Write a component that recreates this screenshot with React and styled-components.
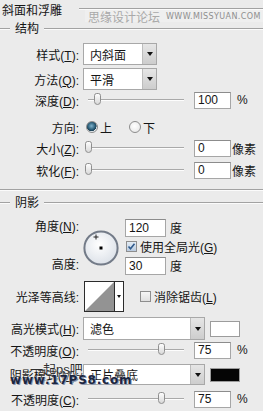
import React from "react";
import styled, { createGlobalStyle } from "styled-components";

const GlobalStyle = createGlobalStyle`
  html, body {
    margin: 0;
    padding: 0;
    background: #ebebeb;
  }
  body {
    font-family: "Liberation Sans", "Noto Sans CJK SC", sans-serif;
    font-size: 12px;
    color: #151515;
  }
`;

const Panel = styled.div`
  position: relative;
  width: 263px;
  height: 411px;
  overflow: hidden;
  background: #ebebeb;
  display: flex;
  flex-direction: column;
`;

const Header = styled.div`
  display: flex;
  align-items: center;
  height: 18px;
  padding-left: 2px;
  gap: 17px;
`;

const Rule = styled.div`
  flex: 1;
  height: 0;
  border-top: 1px solid #a2a2a2;
  border-bottom: 1px solid #fbfbfb;
`;

const Stub = styled(Rule)`
  flex: 0 0 10px;
`;

const Divider = styled(Rule)`
  flex: 0 0 auto;
  margin-top: ${(p) => p.$mt}px;
`;

const Legend = styled.div`
  display: flex;
  align-items: center;
  gap: 4px;
  height: 18px;
  margin-top: ${(p) => p.$mt}px;
`;

const LegendText = styled.span`
  padding: 0 1px;
  line-height: 18px;
`;

const Row = styled.div`
  display: flex;
  align-items: center;
  height: ${(p) => p.$h || 18}px;
  margin-top: ${(p) => p.$mt || 0}px;
`;

const Label = styled.span`
  flex: 0 0 79px;
  margin-right: 4px;
  text-align: right;
  white-space: nowrap;
`;

const Select = styled.div`
  display: flex;
  box-sizing: border-box;
  width: ${(p) => p.$w}px;
  height: 100%;
  border: 1px solid #a8a8a8;
  background: #fff;
`;

const SelectText = styled.span`
  flex: 1;
  display: flex;
  align-items: center;
  padding-left: 6px;
`;

const SelectArrow = styled.span`
  flex: 0 0 13px;
  display: flex;
  align-items: center;
  justify-content: center;
  border-left: 1px solid #bdbdbd;
  background: linear-gradient(#e6e6e6, #cdcdcd);

  &::after {
    content: "";
    border-left: 3px solid transparent;
    border-right: 3px solid transparent;
    border-top: 4px solid #111;
  }
`;

const Swatch = styled.div`
  box-sizing: border-box;
  width: 30px;
  height: ${(p) => p.$h}px;
  margin-left: 5px;
  border: 1px solid #9c9c9c;
  background: ${(p) => p.$color};
`;

const Slider = styled.div`
  position: relative;
  flex: 0 0 96px;
  height: 14px;
  margin: 0 10px 0 5px;
  display: flex;
  align-items: center;

  &::before {
    content: "";
    flex: 1;
    border-top: 1px solid #a9a9a9;
    border-bottom: 1px solid #fdfdfd;
  }
`;

const Thumb = styled.span`
  position: absolute;
  top: 0;
  left: ${(p) => p.$pos}px;
  box-sizing: border-box;
  width: 7px;
  height: 12px;
  border: 1px solid #8f8f8f;
  border-radius: 3px 3px 4px 4px;
  background: linear-gradient(#fdfdfd, #d9d9d9);
`;

const Field = styled.div`
  box-sizing: border-box;
  flex: 0 0 ${(p) => p.$w || 37}px;
  height: ${(p) => p.$h || 17}px;
  display: flex;
  align-items: center;
  padding-left: 3px;
  border: 1px solid #a6a6a6;
  border-top-color: #8c8c8c;
  background: #fff;
`;

const Unit = styled.span`
  margin-left: ${(p) => p.$ml}px;
  white-space: nowrap;
`;

const Choice = styled.span`
  display: flex;
  align-items: center;
  margin-left: ${(p) => p.$ml || 0}px;
`;

const Radio = styled.span`
  box-sizing: border-box;
  flex: 0 0 12px;
  height: 12px;
  margin-right: 2px;
  border-radius: 50%;
  border: 1px solid #8d8d8d;
  background: ${(p) =>
    p.$on
      ? "radial-gradient(circle at 45% 40%, #7fb3cc 0, #2a5d78 45%, #1d3f52 60%, #dfe6ea 64%, #f7f7f7 100%)"
      : "radial-gradient(circle at 45% 40%, #ffffff 0, #ececec 70%, #d9d9d9 100%)"};
`;

const Check = styled.span`
  box-sizing: border-box;
  flex: 0 0 11px;
  height: 11px;
  margin-left: ${(p) => p.$ml || 0}px;
  margin-right: 3px;
  display: flex;
  align-items: center;
  justify-content: center;
  border: 1px solid #8e8e8e;
  background: ${(p) => (p.$on ? "linear-gradient(#e3ecf5, #b9cbe0)" : "linear-gradient(#f6f6f6, #e0e0e0)")};
`;

const AngleBlock = styled.div`
  display: flex;
  height: 57px;
  margin-top: ${(p) => p.$mt}px;
`;

const LabelColumn = styled.div`
  flex: 0 0 79px;
  margin-right: 4px;
  display: flex;
  flex-direction: column;
  justify-content: space-between;
  text-align: right;
`;

const LabelCell = styled.span`
  height: 19px;
  line-height: 19px;
`;

const Dial = styled.svg`
  flex: 0 0 36px;
  margin-top: 12px;
`;

const FieldColumn = styled.div`
  display: flex;
  flex-direction: column;
  margin-left: 6px;
`;

const FieldRow = styled.div`
  display: flex;
  align-items: center;
  height: 19px;
`;

const Contour = styled.div`
  box-sizing: border-box;
  display: flex;
  width: 40px;
  height: 31px;
  margin-left: 1px;
  border: 1px solid #2b2b2b;
  background: #fff;
`;

const ContourArrow = styled.span`
  flex: 1;
  display: flex;
  align-items: center;
  justify-content: center;
  border-left: 1px solid #2b2b2b;

  &::after {
    content: "";
    border-left: 2px solid transparent;
    border-right: 2px solid transparent;
    border-top: 3px solid #111;
  }
`;

const Mark = styled.div`
  position: absolute;
  left: ${(p) => p.$x}px;
  top: ${(p) => p.$y}px;
  white-space: nowrap;
  pointer-events: none;
`;

const MarkBand = styled(Mark)`
  display: flex;
  align-items: center;
  gap: 6px;
  height: 12px;
  padding: 0 3px;
  background: rgba(244, 244, 244, 0.45);
`;

const MarkCn = styled.span`
  font-size: 12px;
  color: #a9a9a9;
`;

const MarkUrl = styled.span`
  font-family: "DejaVu Sans", sans-serif;
  font-size: 8px;
  letter-spacing: 0.4px;
  color: #8e8e8e;
`;

const MarkTitle = styled(Mark)`
  font-size: 13px;
  color: #2f2f2f;
  text-shadow: 0 0 2px #fff;
`;

const MarkSite = styled(Mark)`
  font-family: "DejaVu Sans", sans-serif;
  font-size: 12px;
  font-weight: bold;
  letter-spacing: 0.8px;
  color: #1b2640;
  text-shadow: 1px 1px 0 #8c96ad, 0 0 2px #fff;
`;

const sliderRow = (mt, label, pos, value, unit, ml) => (
  <Row $mt={mt} $h={18}>
    <Label>{label}</Label>
    <Slider>
      <Thumb $pos={pos} />
    </Slider>
    <Field>{value}</Field>
    <Unit $ml={ml}>{unit}</Unit>
  </Row>
);

export default function App() {
  return (
    <Panel>
      <GlobalStyle />

      <Header>
        <span>斜面和浮雕</span>
        <Rule />
      </Header>

      <Legend $mt={2}>
        <Stub />
        <LegendText>结构</LegendText>
        <Rule />
      </Legend>

      <Row $mt={5} $h={22}>
        <Label>
          样式(<u>T</u>):
        </Label>
        <Select $w={74}>
          <SelectText>内斜面</SelectText>
          <SelectArrow />
        </Select>
      </Row>

      <Row $mt={3} $h={22}>
        <Label>
          方法(<u>Q</u>):
        </Label>
        <Select $w={74}>
          <SelectText>平滑</SelectText>
          <SelectArrow />
        </Select>
      </Row>

      {sliderRow(1, <>深度(<u>D</u>):</>, 6, "100", "%", 6)}

      <Row $mt={9}>
        <Label>方向:</Label>
        <Choice $ml={3}>
          <Radio $on />
          <span>上</span>
        </Choice>
        <Choice $ml={17}>
          <Radio />
          <span>下</span>
        </Choice>
      </Row>

      {sliderRow(3, <>大小(<u>Z</u>):</>, -3, "0", "像素", 1)}
      {sliderRow(4, <>软化(<u>F</u>):</>, -3, "0", "像素", 1)}

      <Divider $mt={10} />

      <Legend $mt={3}>
        <Stub />
        <LegendText>阴影</LegendText>
        <Rule />
      </Legend>

      <AngleBlock $mt={6}>
        <LabelColumn>
          <LabelCell>
            角度(<u>N</u>):
          </LabelCell>
          <LabelCell>高度:</LabelCell>
        </LabelColumn>
        <Dial width="36" height="36" viewBox="0 0 36 36">
          <defs>
            <radialGradient id="dialFill" cx="45%" cy="40%" r="60%">
              <stop offset="0" stopColor="#ffffff" />
              <stop offset="1" stopColor="#dde2e9" />
            </radialGradient>
          </defs>
          <circle cx="18" cy="18" r="16.6" fill="url(#dialFill)" stroke="#737b88" strokeWidth="2" />
          <path d="M13 4.5v5M10.5 7h5" stroke="#222" strokeWidth="1" />
          <rect x="16.5" y="16.5" width="3" height="3" fill="#000" />
        </Dial>
        <FieldColumn>
          <FieldRow>
            <Field $w={41} $h={18}>120</Field>
            <Unit $ml={4}>度</Unit>
          </FieldRow>
          <FieldRow>
            <Check $on $ml={1}>
              <svg width="9" height="9" viewBox="0 0 9 9">
                <path d="M1.5 4.5l2 2.2 4-5" fill="none" stroke="#2f5a8c" strokeWidth="1.6" />
              </svg>
            </Check>
            <span>
              使用全局光(<u>G</u>)
            </span>
          </FieldRow>
          <FieldRow>
            <Field $w={41} $h={18}>30</Field>
            <Unit $ml={4}>度</Unit>
          </FieldRow>
        </FieldColumn>
      </AngleBlock>

      <Row $mt={6} $h={31}>
        <Label>光泽等高线:</Label>
        <Contour>
          <svg width="29" height="29" viewBox="0 0 29 29">
            <polygon points="0,29 29,0 29,29" fill="#939393" />
          </svg>
          <ContourArrow />
        </Contour>
        <Check $ml={16} />
        <span>
          消除锯齿(<u>L</u>)
        </span>
      </Row>

      <Row $mt={5} $h={23}>
        <Label>
          高光模式(<u>H</u>):
        </Label>
        <Select $w={122}>
          <SelectText>滤色</SelectText>
          <SelectArrow />
        </Select>
        <Swatch $color="#ffffff" $h={16} />
      </Row>

      {sliderRow(1, <>不透明度(<u>O</u>):</>, 70, "75", "%", 6)}

      <Row $mt={5} $h={21}>
        <Label>
          阴影模式(<u>M</u>):
        </Label>
        <Select $w={122}>
          <SelectText>正片叠底</SelectText>
          <SelectArrow />
        </Select>
        <Swatch $color="#050505" $h={14} />
      </Row>

      {sliderRow(5, <>不透明度(<u>C</u>):</>, 70, "75", "%", 6)}

      <MarkBand $x={85} $y={10}>
        <MarkCn>思缘设计论坛</MarkCn>
        <MarkUrl>WWW.MISSYUAN.COM</MarkUrl>
      </MarkBand>
      <MarkTitle $x={30} $y={359}>一起ps吧</MarkTitle>
      <MarkSite $x={10} $y={373}>www.17PS8.com</MarkSite>
    </Panel>
  );
}
